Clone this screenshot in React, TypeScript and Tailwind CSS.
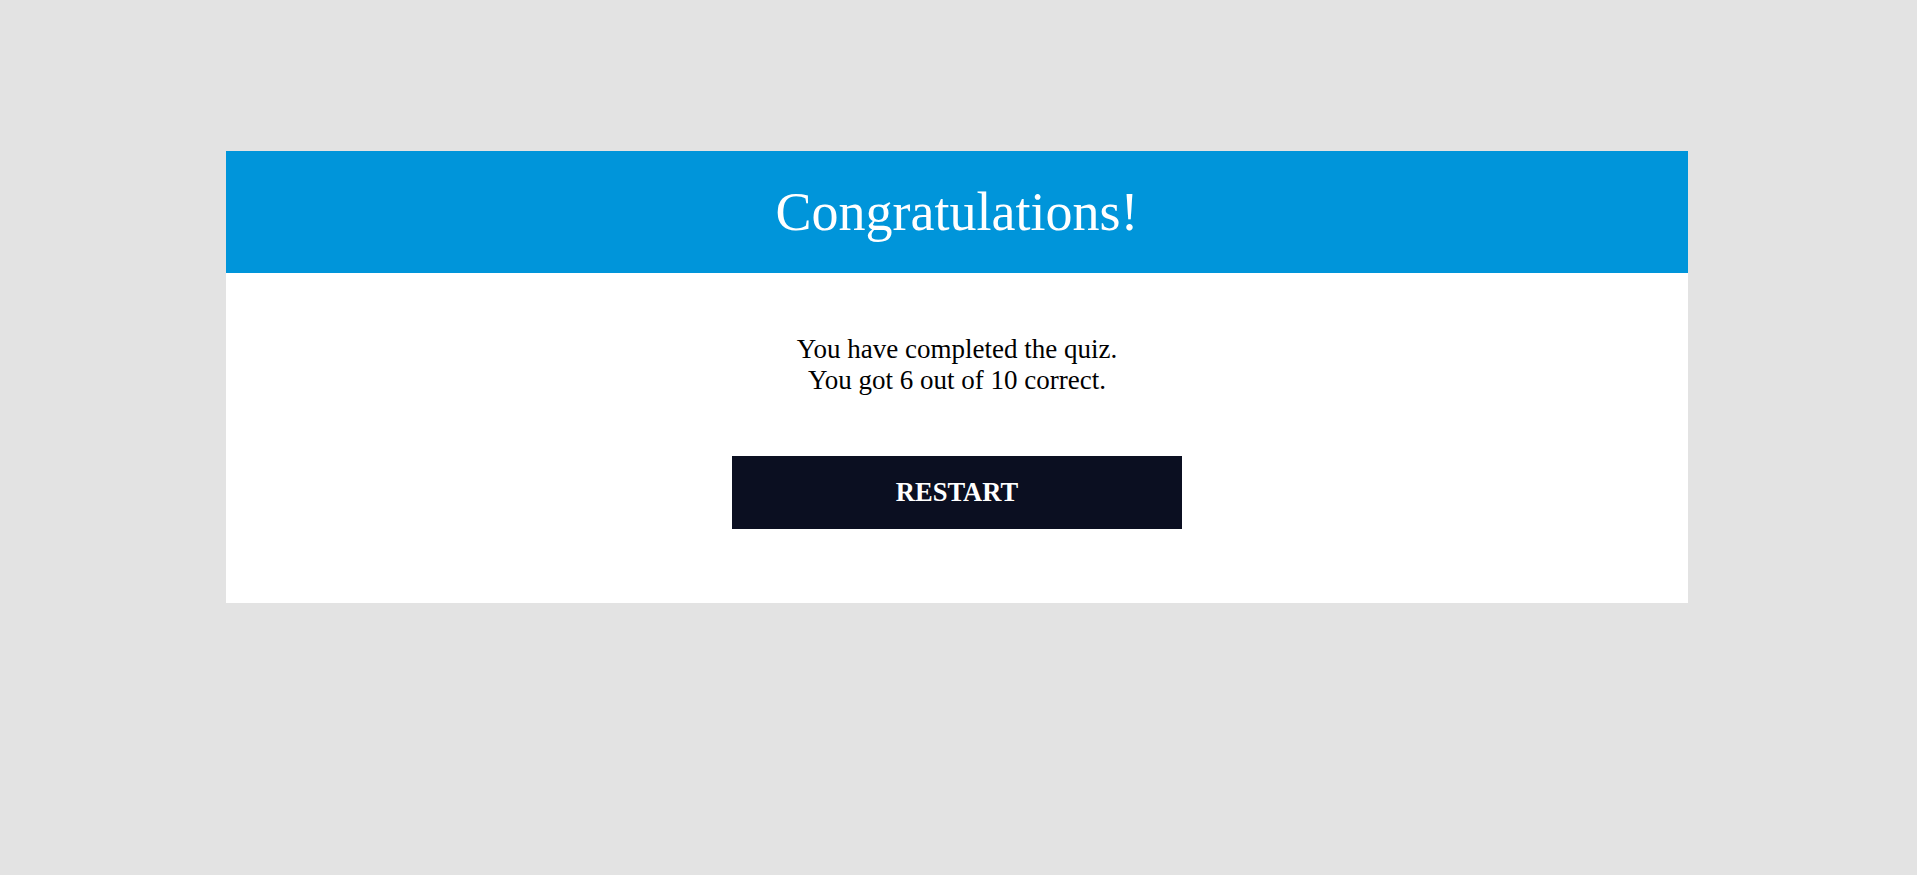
import React from 'react';

export default function App() {
  return (
    <div className="min-h-[875px] w-full bg-[#e3e3e3] pt-[151px] font-['Liberation_Serif','Times_New_Roman',serif]">
      <div className="ml-[226px] w-[1462px] bg-white">
        <div className="flex h-[122px] items-center justify-center bg-[#0095da]">
          <h1 className="text-[54px] leading-none text-white">Congratulations!</h1>
        </div>
        <div className="flex flex-col items-center pt-[61px] pb-[74px]">
          <p className="text-center text-[27px] leading-[31px] text-black">
            You have completed the quiz.
            <br />
            You got 6 out of 10 correct.
          </p>
          <button className="mt-[60px] flex h-[73px] w-[450px] items-center justify-center bg-[#0b0f21] text-[26.5px] font-bold text-white">
            RESTART
          </button>
        </div>
      </div>
    </div>
  );
}
